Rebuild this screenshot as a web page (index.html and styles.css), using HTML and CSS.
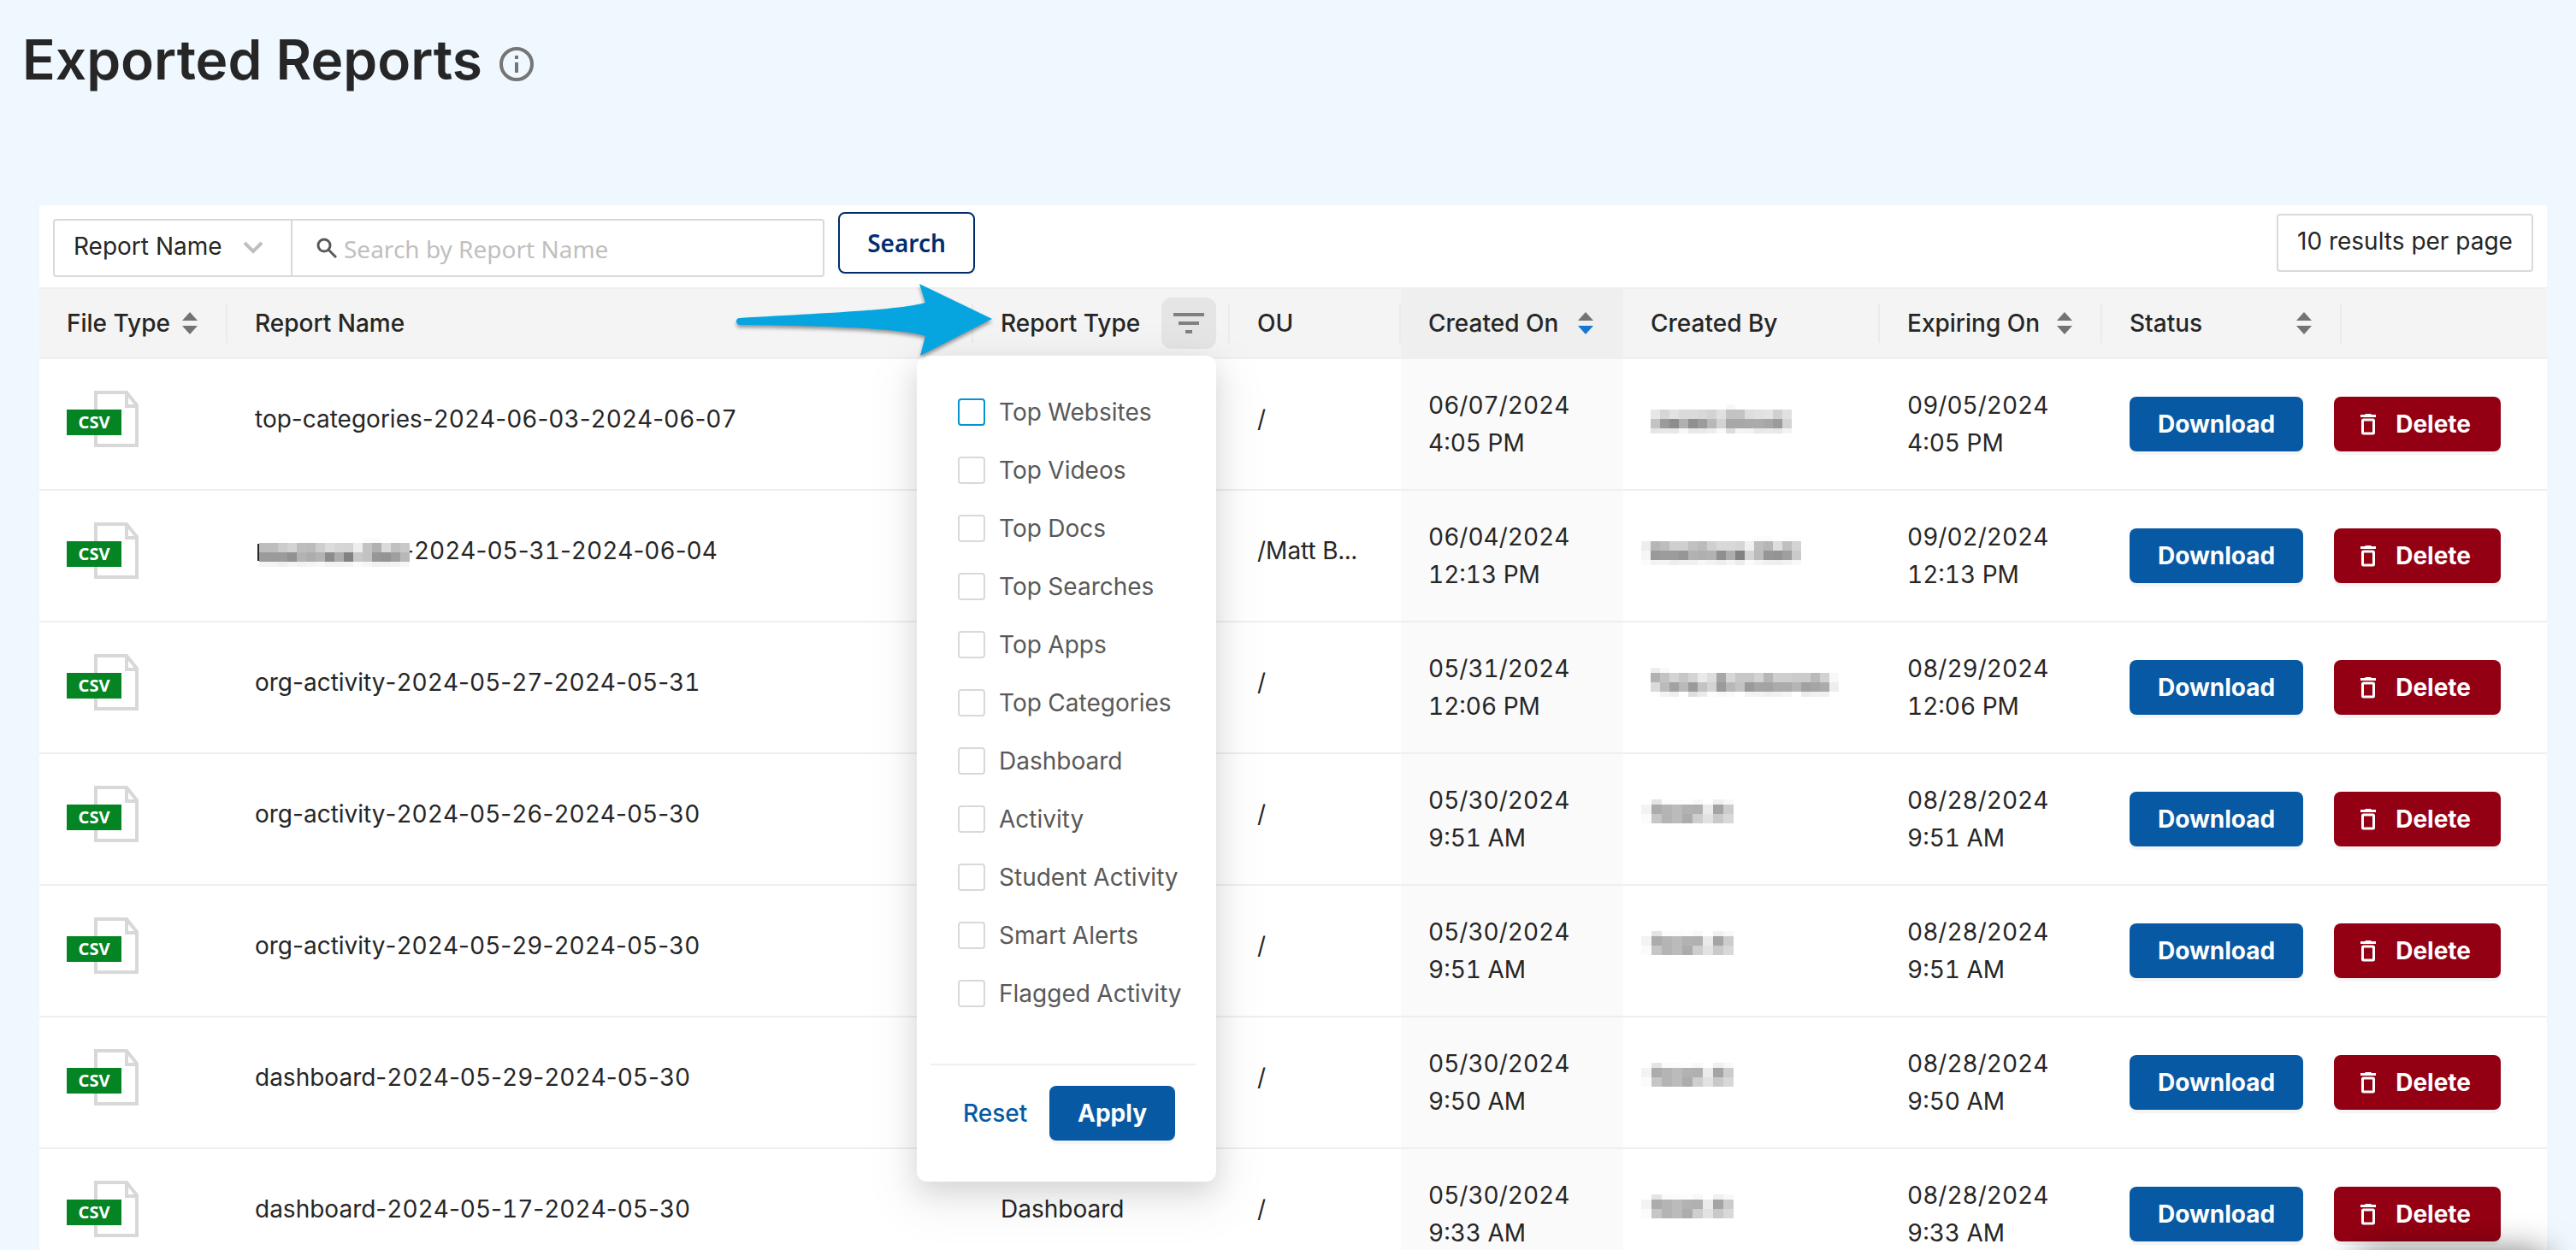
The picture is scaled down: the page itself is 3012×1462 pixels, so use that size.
FILE: index.html
```html
<!DOCTYPE html>
<html lang="en">
<head>
    <meta charset="UTF-8">
    <title>Exported Reports</title>
    <link rel="stylesheet" href="styles.css">
</head>
<body>

<svg class="sprite" aria-hidden="true">
    <symbol id="icon-sort" viewBox="0 0 24 28">
        <path class="up" d="M12 1l9 10H3z"/>
        <path class="down" d="M12 27l9-10H3z"/>
    </symbol>
    <symbol id="icon-trash" viewBox="0 0 20 26">
        <path fill="#fff" d="M1 2h5l1-1h6l1 1h5v3H1z"/>
        <rect x="3.500" y="8" width="13" height="16" rx="1" fill="none" stroke="#fff" stroke-width="3"/>
    </symbol>
</svg>

<div class="page">
    <div class="page-header">
        <h1>Exported Reports</h1>
        <svg class="info" width="40" height="40" viewBox="0 0 40 40">
            <circle cx="20" cy="20" r="18" fill="none" stroke="#757575" stroke-width="4"/>
            <path fill="#757575" d="M18 10h4v4h-4zM18 18h4v12h-4z"/>
        </svg>
    </div>

    <div class="card">
        <div class="toolbar">
            <div class="search-group">
                <select class="field-select" aria-label="Search field">
                    <option>Report Name</option>
                </select>
                <div class="search-box">
                    <svg width="24" height="24" viewBox="0 0 24 24" fill="none" stroke="#595959" stroke-width="3">
                        <circle cx="9" cy="9" r="7"/>
                        <path d="M14 14l9 9"/>
                    </svg>
                    <input type="text" placeholder="Search by Report Name" aria-label="Search by Report Name">
                </div>
            </div>
            <button class="btn-search">Search</button>
            <select class="page-size" aria-label="Results per page">
                <option>10 results per page</option>
            </select>
        </div>

        <table class="reports">
            <colgroup>
                <col class="col-file">
                <col>
                <col class="col-type">
                <col class="col-ou">
                <col class="col-date">
                <col class="col-by">
                <col class="col-date">
                <col class="col-status">
                <col class="col-actions">
            </colgroup>
            <thead>
                <tr>
                    <th class="split"><div class="head">File Type <svg class="sort"><use href="#icon-sort"/></svg></div></th>
                    <th class="split">Report Name</th>
                    <th class="split type-head">
                        <div class="head">
                            Report Type
                            <button class="btn-filter" aria-label="Filter report type">
                                <svg width="36" height="24" viewBox="0 0 36 24" fill="#808080">
                                    <path d="M0 0h36v4H0zM6 10h24v4H6zM14 20h8v4h-8z"/>
                                </svg>
                            </button>
                        </div>
                        <div class="filter-menu">
                            <div class="filter-list">
                                <label><input type="checkbox" class="active"> Top Websites</label>
                                <label><input type="checkbox"> Top Videos</label>
                                <label><input type="checkbox"> Top Docs</label>
                                <label><input type="checkbox"> Top Searches</label>
                                <label><input type="checkbox"> Top Apps</label>
                                <label><input type="checkbox"> Top Categories</label>
                                <label><input type="checkbox"> Dashboard</label>
                                <label><input type="checkbox"> Activity</label>
                                <label><input type="checkbox"> Student Activity</label>
                                <label><input type="checkbox"> Smart Alerts</label>
                                <label><input type="checkbox"> Flagged Activity</label>
                            </div>
                            <div class="filter-actions">
                                <button class="btn-reset">Reset</button>
                                <button class="btn">Apply</button>
                            </div>
                        </div>
                        <svg class="arrow" width="300" height="86" viewBox="0 0 300 86">
                            <path fill="#06a5e0" d="M4 40C90 35 190 31 221 22L214 0L299 41L215 84L221 61C190 51 90 49 4 48Q0 47 0 44Q0 40 4 40Z"/>
                        </svg>
                    </th>
                    <th class="split">OU</th>
                    <th class="sorted"><div class="head">Created On <svg class="sort desc"><use href="#icon-sort"/></svg></div></th>
                    <th class="split">Created By</th>
                    <th class="split"><div class="head">Expiring On <svg class="sort"><use href="#icon-sort"/></svg></div></th>
                    <th class="split"><div class="head">Status <svg class="sort"><use href="#icon-sort"/></svg></div></th>
                    <th></th>
                </tr>
            </thead>
            <tbody id="report-rows"></tbody>
        </table>
    </div>
</div>
<div class="widget"></div>

<script>
    // each name is four strips of grey cells, two hex digits per cell
    const names = {
        janet: { cell: 11, strips: [
            'fffffffffffffffffff8ffffffffffff',
            'ffe6d6e2dadad8d3e0c3c3dde1e3d0e0',
            'ffc39b8db08f9cb8d3a8a8aaaba69bd4',
            'ffe5e8e8f7e8e9eef9dcf4f3e8eae8f4'] },
        matthew: { cell: 11, strips: [
            'fffffffffdfffffffffffffffcfcfffdfd',
            'edb6bdcfcfc0bbcfd9d8d5f0beb6ddbfd3',
            'f69a9c9c96b2b0b28fad82d4bb96949fca',
            'fbf3f4edf1f0f7f3eef5ecfbf5efeef3f8'] },
        tony: { cell: 11, strips: [
            'ffeef9ffffffffffffffffffffffffffffffffffff',
            'ffb2c3d4c6d4eadda7d7c7c7d3b6cececbcbbad2f8',
            'ffdabba2b99bc3d49ab8c39aa4a3ababb5a1a5abee',
            'fffdf4eeffdfebfcf8fafff4f3eff1f5ffecf1f0ff'] },
        sean: { cell: 12, strips: [
            'ffe4fbfbfdf8fff0f8',
            'f3acb4bbb2b0eba4cc',
            'fbc6b4bbaccee2c9d8',
            'ffffffffffffffffff'] },
        report: { cell: 11, strips: [
            'fffffdfffffffffffffffffbfbfffdff',
            'bdbdcbd3bdbbcddcd6d5eec3b0dac0c8',
            '9b9b9b91b3adb38cac82c9c297949fb8',
            'f4f4eff4f1f4f7f2f2f3fbf6f1f1f3f7'] }
    };

    const reports = [
        { name: 'top-categories-2024-06-03-2024-06-07', type: '', ou: '/', created: ['06/07/2024', '4:05 PM'], by: 'janet', expires: '09/05/2024' },
        { masked: true, name: '-2024-05-31-2024-06-04', type: '', ou: '/Matt B...', created: ['06/04/2024', '12:13 PM'], by: 'matthew', expires: '09/02/2024' },
        { name: 'org-activity-2024-05-27-2024-05-31', type: '', ou: '/', created: ['05/31/2024', '12:06 PM'], by: 'tony', expires: '08/29/2024' },
        { name: 'org-activity-2024-05-26-2024-05-30', type: '', ou: '/', created: ['05/30/2024', '9:51 AM'], by: 'sean', expires: '08/28/2024' },
        { name: 'org-activity-2024-05-29-2024-05-30', type: '', ou: '/', created: ['05/30/2024', '9:51 AM'], by: 'sean', expires: '08/28/2024' },
        { name: 'dashboard-2024-05-29-2024-05-30', type: '', ou: '/', created: ['05/30/2024', '9:50 AM'], by: 'sean', expires: '08/28/2024' },
        { name: 'dashboard-2024-05-17-2024-05-30', type: 'Dashboard', ou: '/', created: ['05/30/2024', '9:33 AM'], by: 'sean', expires: '08/28/2024' }
    ];

    const csvIcon = `<svg class="csv" width="84" height="66" viewBox="0 0 84 66">
        <path fill="none" stroke="#d8d8d8" stroke-width="4" d="M34 2h36l12 15v47H34zM70 2v16h12"/>
        <rect y="22" width="64" height="30" fill="#048423"/>
        <text x="32" y="44" text-anchor="middle">CSV</text>
    </svg>`;

    function drawMask(key, className, extra) {
        const { cell, strips } = names[key];
        const tops = [0, 6, 17, 28];
        const heights = [6, 11, 11, 6];
        let rects = '';
        strips.forEach(function (strip, row) {
            for (let i = 0; i < strip.length; i += 2) {
                const grey = strip.slice(i, i + 2);
                if (grey === 'ff') continue;
                rects += `<rect x="${i / 2 * cell}" y="${tops[row]}" width="${cell}" height="${heights[row]}" fill="#${grey + grey + grey}"/>`;
            }
        });
        const width = strips[0].length / 2 * cell;
        return `<svg class="${className}" width="${width}" height="34" shape-rendering="crispEdges">${extra || ''}${rects}</svg>`;
    }

    // tabular figures would also widen the hyphens
    function formatName(name) {
        return name.replace(/-/g, '<span class="dash">-</span>');
    }

    function renderRows() {
        document.getElementById('report-rows').innerHTML = reports.map(function (r) {
            const mask = r.masked ? drawMask('report', 'name-mask', '<rect x="-2" y="7" width="3" height="20" fill="#262626"/>') : '';
            return `<tr>
                <td>${csvIcon}</td>
                <td>${mask}${formatName(r.name)}</td>
                <td>${r.type}</td>
                <td>${r.ou}</td>
                <td class="date sorted">${r.created[0]}<br>${r.created[1]}</td>
                <td>${drawMask(r.by, 'by-mask')}</td>
                <td class="date">${r.expires}<br>${r.created[1]}</td>
                <td class="date" colspan="2">
                    <div class="actions">
                        <button class="btn">Download</button>
                        <button class="btn btn-delete"><svg width="20" height="26"><use href="#icon-trash"/></svg>Delete</button>
                    </div>
                </td>
            </tr>`;
        }).join('');
    }

    renderRows();
</script>

</body>
</html>
```
FILE: styles.css
```css
* {
    box-sizing: border-box;
}

body {
    margin: 0;
    background-color: #eff7ff;
    color: #262626;
    font-family: Inter, "Liberation Sans", sans-serif;
    font-size: 28px;
    line-height: 44px;
}

button, input, select {
    font: inherit;
    color: inherit;
}

button {
    cursor: pointer;
}

.sprite {
    position: absolute;
    width: 0;
    height: 0;
}

.page {
    height: 100vh;
    padding: 28px 34px 0 26px;
    overflow: hidden;
}

.page-header {
    display: flex;
    align-items: center;
    gap: 20px;
    height: 212px;
    padding-bottom: 128px;
}

.page-header h1 {
    margin: 0;
    font-size: 64px;
    line-height: 84px;
    font-weight: 600;
}

.info {
    margin-top: 10px;
}

.card {
    margin-left: 20px;
    background-color: #fff;
}

/* toolbar */
.toolbar {
    display: flex;
    align-items: flex-start;
    height: 96px;
    padding: 8px 16px;
}

.search-group {
    display: flex;
    width: 902px;
    margin-top: 8px;
    margin-right: 16px;
}

.field-select, .page-size {
    appearance: none;
    height: 68px;
    padding: 0 22px 4px;
    border: 2px solid #d9d9d9;
    border-radius: 4px;
    background-color: #fff;
}

.field-select {
    width: 280px;
    border-radius: 4px 0 0 4px;
    background-image: url("data:image/svg+xml,%3Csvg xmlns='http://www.w3.org/2000/svg' width='24' height='16' fill='none' stroke='%23bfbfbf' stroke-width='4'%3E%3Cpath d='M2 2l10 10L22 2'/%3E%3C/svg%3E");
    background-repeat: no-repeat;
    background-position: right 32px center;
}

.page-size {
    margin-top: 2px;
    margin-left: auto;
}

.search-box {
    display: flex;
    flex: 1;
    align-items: center;
    gap: 8px;
    height: 68px;
    padding: 0 28px;
    border: 2px solid #d9d9d9;
    border-left: 0;
    border-radius: 0 4px 4px 0;
}

.search-box input {
    flex: 1;
    border: 0;
    padding: 2px 0 0;
    outline: none;
    font-family: "Noto Sans", "Open Sans", sans-serif;
}

.search-box input::placeholder {
    color: #bfbfbf;
}

.btn-search {
    width: 160px;
    height: 72px;
    border: 2px solid #002d6d;
    border-radius: 8px;
    background-color: #fff;
    color: #002d6d;
    font-family: "Noto Sans", "Open Sans", sans-serif;
    font-weight: 600;
    box-shadow: 0 4px 0 rgba(0, 0, 0, 0.02);
}

/* table */
.reports {
    width: 100%;
    table-layout: fixed;
    border-collapse: separate;
    border-spacing: 0;
    font-feature-settings: "tnum";
}

.col-file { width: 220px; }
.col-type { width: 300px; }
.col-ou { width: 200px; }
.col-date { width: 260px; }
.col-by { width: 300px; }
.col-status { width: 280px; }
.col-actions { width: 240px; }

.reports th {
    height: 84px;
    padding: 0 32px;
    border-top: 2px solid #efefef;
    border-bottom: 2px solid #efefef;
    background-color: #f4f4f4;
    font-weight: 500;
    text-align: left;
}

.reports th.split {
    background-image: linear-gradient(#ebebeb, #ebebeb);
    background-repeat: no-repeat;
    background-position: right center;
    background-size: 2px 46px;
}

.reports td {
    height: 154px;
    padding: 26px 32px 38px;
    border-bottom: 2px solid #efefef;
}

.reports td.date {
    padding: 32px;
}

.reports th.sorted {
    background-color: #efefef;
}

.reports td.sorted {
    background-color: #fafafa;
}

.dash {
    font-feature-settings: normal;
}

.head {
    display: flex;
    align-items: center;
    justify-content: space-between;
}

.sort {
    width: 24px;
    height: 28px;
    fill: #737373;
}

.sort.desc {
    --down: #1677d2;
}

.down {
    fill: var(--down, #737373);
}

.csv, .by-mask {
    display: block;
}

.csv text {
    fill: #fff;
    font-family: "Noto Sans", "Open Sans", sans-serif;
    font-size: 20px;
    font-weight: 700;
}

/* the first cell of a mask hangs out of the column */
.by-mask {
    margin-left: -11px;
}

.name-mask {
    position: relative;
    margin-right: -8px;
    margin-left: 5px;
    overflow: visible;
    vertical-align: middle;
}

.actions {
    display: flex;
    gap: 36px;
}

.btn {
    display: flex;
    align-items: center;
    justify-content: center;
    height: 64px;
    padding: 0 33px;
    border: 0;
    border-radius: 8px;
    background-color: #0859a4;
    color: #fff;
    font-weight: 700;
    box-shadow: 0 4px 0 rgba(0, 0, 0, 0.04);
}

.btn-delete {
    gap: 22px;
    padding: 0 35px 0 30px;
    background-color: #940013;
}

/* filter menu */
.type-head {
    position: relative;
}

.type-head .head {
    margin-right: -16px;
}

.btn-filter {
    display: flex;
    align-items: center;
    justify-content: center;
    width: 64px;
    height: 60px;
    padding: 0;
    border: 0;
    border-radius: 12px;
    background-color: #e5e5e5;
}

.filter-menu {
    position: absolute;
    z-index: 1;
    top: 78px;
    right: 16px;
    width: 350px;
    padding: 32px 24px 48px 16px;
    border-radius: 12px;
    background-color: #fff;
    color: #595959;
    font-weight: 400;
    box-shadow: 0 12px 32px rgba(0, 0, 0, 0.12), 0 18px 56px 16px rgba(0, 0, 0, 0.05);
}

.filter-list {
    padding: 0 0 48px 32px;
    border-bottom: 2px solid #efefef;
}

.filter-list label {
    display: flex;
    align-items: center;
    gap: 16px;
    height: 68px;
    white-space: nowrap;
}

.filter-list input {
    appearance: none;
    flex: none;
    width: 32px;
    height: 32px;
    margin: 0;
    border: 2px solid #d9d9d9;
    border-radius: 4px;
}

.filter-list input.active {
    border-color: #0594d0;
}

.filter-actions {
    display: flex;
    align-items: center;
    justify-content: space-between;
    padding: 24px 24px 0 38px;
}

.btn-reset {
    padding: 0;
    border: 0;
    background: none;
    color: #0859a4;
    font-weight: 500;
}

.arrow {
    position: absolute;
    z-index: 2;
    top: -6px;
    right: 277px;
    filter: drop-shadow(0 3px 2px rgba(0, 0, 0, 0.4));
}

/* floating widget, parked just under the fold */
.widget {
    position: fixed;
    right: 36px;
    bottom: -42px;
    width: 220px;
    height: 36px;
    border-radius: 12px;
    box-shadow: 0 0 40px 2px rgba(0, 0, 0, 0.6);
}
```
